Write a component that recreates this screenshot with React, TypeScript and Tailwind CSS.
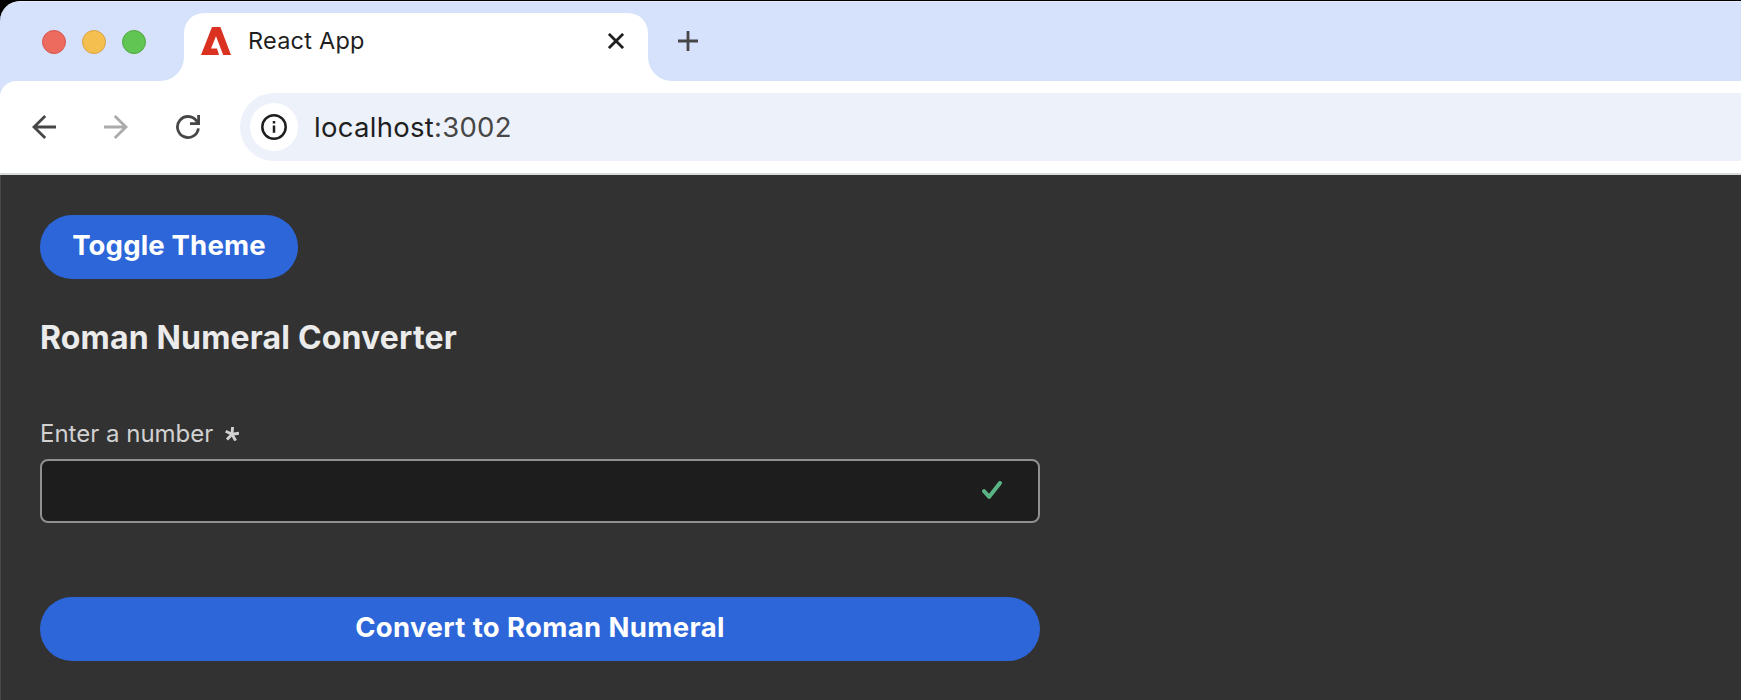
import React from 'react';

function TabStrip() {
  return (
    <div className="flex h-20 items-end rounded-tl-[20px] border-t border-[#e9edfb] bg-[#d6e1fc]">
      <div className="flex h-[68px] w-40 items-start gap-4 pt-[17px] pl-[42px]">
        <span className="size-6 rounded-full border border-[#d5574c] bg-[#ed6a5e]" />
        <span className="size-6 rounded-full border border-[#d8a243] bg-[#f5bf4f]" />
        <span className="size-6 rounded-full border border-[#50a73f] bg-[#61c554]" />
      </div>
      <svg className="h-[68px] w-6 shrink-0" viewBox="0 0 24 68" fill="#fff">
        <path d="M24 44v24H0A24 24 0 0 0 24 44Z" />
      </svg>
      <div className="flex h-[68px] w-[464px] items-start rounded-t-[20px] bg-white pt-px pl-[17px]">
        <svg className="mt-[13px] h-7 w-[30px]" viewBox="0 0 30 28" fill="#da3120">
          <path d="M11 0h8.4L30 28h-7.8L15 9.2 10 21.6h6L18 28H0Z" />
        </svg>
        <span className="ml-[17px] h-14 w-[360px] text-[23.5px] leading-[53px] tracking-[0.22px] whitespace-nowrap text-[#1f1f1f]">
          React App
        </span>
        <svg className="mt-[19px] size-4" viewBox="0 0 16 16" stroke="#1f1f1f" strokeWidth="2.8" strokeLinecap="butt">
          <path d="M.9.9l14.2 14.2M15.1.9L.9 15.1" />
        </svg>
      </div>
      <svg className="h-[68px] w-6 shrink-0" viewBox="0 0 24 68" fill="#fff">
        <path d="M0 44v24h24A24 24 0 0 1 0 44Z" />
      </svg>
      <svg className="mb-[30px] ml-1.5 size-5" viewBox="0 0 20 20" stroke="#474747" strokeWidth="2.8">
        <path d="M0 10h20M10 0v20" />
      </svg>
    </div>
  );
}

function Toolbar() {
  return (
    <div className="bg-[#d6e1fc]">
      <div className="flex h-[92px] items-center rounded-tl-[16px] bg-white pl-8">
        <svg className="size-6" viewBox="0 0 24 24" fill="none" stroke="#474747" strokeWidth="2.8">
          <path d="M24 12H2M13.2 1L2 12l11.2 11" />
        </svg>
        <svg className="ml-12 size-6" viewBox="0 0 24 24" fill="none" stroke="#ababab" strokeWidth="2.8">
          <path d="M0 12h22M10.8 1L22 12 10.8 23" />
        </svg>
        <svg className="ml-12 size-6" viewBox="0 0 24 24" fill="none" stroke="#474747" strokeWidth="2.8">
          <path d="M22.4 13.3A10.5 10.5 0 1 1 20.6 6L22.3 8.6M22.6 0v8.6H14" />
        </svg>
        <div className="ml-10 flex h-[68px] flex-1 items-center rounded-l-full bg-[#edf1fa] pl-2.5">
          <div className="flex size-12 items-center justify-center rounded-full bg-white">
            <svg className="size-[26px]" viewBox="0 0 26 26" fill="none" stroke="#1f1f1f" strokeWidth="2.5">
              <circle cx="13" cy="13" r="11.7" />
              <path d="M13 11.5v7.3M13 7v2.6" />
            </svg>
          </div>
          <div className="ml-4 text-[27.5px] leading-[66px] tracking-[0.28px] text-[#1f1f1f]">
            localhost<span className="text-[#474747]">:3002</span>
          </div>
        </div>
      </div>
      <div className="h-0.5 bg-[#d9dcdc]" />
    </div>
  );
}

export default function App() {
  return (
    <div className="flex h-[700px] w-full flex-col overflow-hidden bg-black pt-px font-['Inter',sans-serif]">
      <TabStrip />
      <Toolbar />
      <main className="flex flex-1 flex-col items-start border-l border-[#484848] bg-[#323232] pt-10 pl-[39px]">
        <button className="h-16 w-[258px] rounded-full bg-[#2c66d9] pb-0.5 text-[27.5px] font-bold tracking-[0.18px] whitespace-nowrap text-white">
          Toggle Theme
        </button>
        <h1 className="mt-[39px] h-10 text-[32px] leading-10 font-bold tracking-[0.17px] whitespace-nowrap text-[#ebebeb]">
          Roman Numeral Converter
        </h1>
        <label className="mt-[60px] flex h-8 items-center text-[24px] leading-8 whitespace-nowrap text-[#d1d1d1]">
          Enter a number
          <svg className="ml-3 size-[14px]" viewBox="0 0 14 14" stroke="#d1d1d1" strokeWidth="2.9">
            <path d="M7 7.2L7.6 0M7 7.2L.7 4.2M7 7.2l7-1M7 7.2l-5 5.4M7 7.2l3.6 6.4" />
          </svg>
        </label>
        <div className="mt-[9px] flex h-16 w-[1000px] items-center justify-end rounded-lg border-2 border-[#909090] bg-[#1d1d1d] pr-9 pb-0.5">
          <svg className="h-[18px] w-5" viewBox="0 0 20 18" fill="none" stroke="#59b384" strokeWidth="4" strokeLinecap="round" strokeLinejoin="round">
            <path d="M2 10.2l5.2 5.6L18 2" />
          </svg>
        </div>
        <button className="mt-[74px] h-16 w-[1000px] rounded-full bg-[#2c66d9] pb-0.5 text-[27.5px] font-bold tracking-[0.37px] text-white">
          Convert to Roman Numeral
        </button>
      </main>
    </div>
  );
}
